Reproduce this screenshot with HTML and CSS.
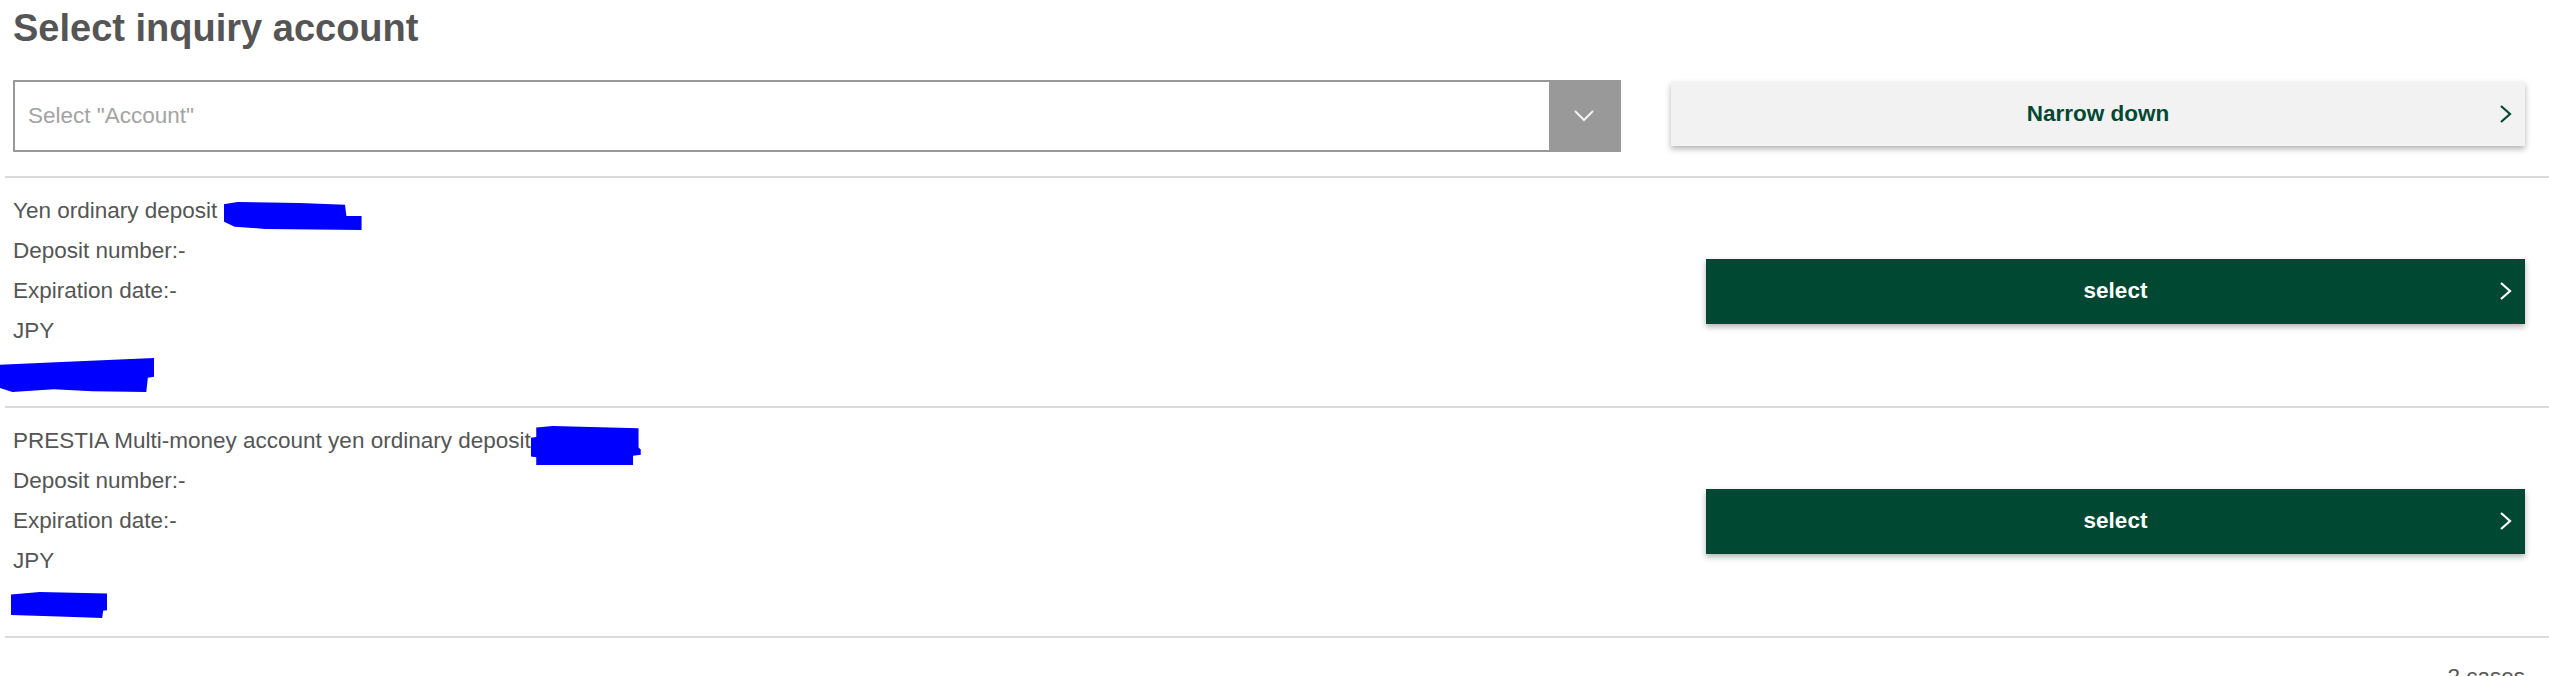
FILE: index.html
```html
<!DOCTYPE html>
<html lang="en">
<head>
    <meta charset="utf-8">
    <title>Select inquiry account</title>
    <link rel="stylesheet" href="styles.css">
</head>
<body>
<div class="page">
    <h1 class="title">Select inquiry account</h1>

    <div class="filter">
        <div class="dropdown">
            <span class="dropdown-text">Select "Account"</span>
            <span class="dropdown-arrow">
                <svg width="22" height="14" viewBox="0 0 22 14"><polyline points="2,2 11,11 20,2" fill="none" stroke="#f4f4f4" stroke-width="2"/></svg>
            </span>
        </div>
        <button class="btn btn-narrow">
            <span class="btn-label">Narrow down</span>
            <svg class="btn-icon" width="13" height="20" viewBox="0 0 13 20"><polyline points="2,2 11,10 2,18" fill="none" stroke="#004832" stroke-width="2.2"/></svg>
        </button>
    </div>

    <ul class="accounts">
        <li class="account">
            <div class="account-info">
                <p>Yen ordinary deposit <span class="mask mask-1"></span></p>
                <p>Deposit number:-</p>
                <p>Expiration date:-</p>
                <p>JPY</p>
                <p><span class="mask mask-2"></span></p>
            </div>
            <button class="btn btn-select">
                <span class="btn-label">select</span>
                <svg class="btn-icon" width="13" height="20" viewBox="0 0 13 20"><polyline points="2,2 11,10 2,18" fill="none" stroke="#ffffff" stroke-width="2.2"/></svg>
            </button>
        </li>
        <li class="account">
            <div class="account-info">
                <p>PRESTIA Multi-money account yen ordinary deposit<span class="mask mask-3"></span></p>
                <p>Deposit number:-</p>
                <p>Expiration date:-</p>
                <p>JPY</p>
                <p><span class="mask mask-4"></span></p>
            </div>
            <button class="btn btn-select">
                <span class="btn-label">select</span>
                <svg class="btn-icon" width="13" height="20" viewBox="0 0 13 20"><polyline points="2,2 11,10 2,18" fill="none" stroke="#ffffff" stroke-width="2.2"/></svg>
            </button>
        </li>
    </ul>

    <p class="count">2 cases</p>
</div>
</body>
</html>
```

FILE: styles.css
```css
body {
    margin: 0;
    font-family: "Liberation Sans", Arial, sans-serif;
    color: #555555;
    background-color: #ffffff;
}
.page {
    padding-left: 5px;
}
.title {
    margin: 0;
    padding: 6px 0 0 8px;
    font-size: 38px;
    line-height: 44px;
    font-weight: 700;
    color: #555555;
}

/* account filter */
.filter {
    display: flex;
    align-items: flex-start;
    gap: 50px;
    margin-top: 30px;
    padding: 0 24px 0 8px;
}
.dropdown {
    flex: 1;
    display: flex;
    align-items: stretch;
    height: 72px;
    box-sizing: border-box;
    border: 2px solid #999999;
}
.dropdown-text {
    flex: 1;
    display: flex;
    align-items: center;
    padding-left: 13px;
    font-size: 22.5px;
    color: #a3a3a3;
}
.dropdown-arrow {
    width: 70px;
    display: flex;
    align-items: center;
    justify-content: center;
    background-color: #999999;
}

/* buttons */
.btn {
    display: grid;
    grid-template-columns: 1fr auto 1fr;
    align-items: center;
    border: 0;
    padding: 0;
    font-family: inherit;
    font-size: 22.5px;
    font-weight: 700;
    box-shadow: 0 3px 6px rgba(0, 0, 0, 0.3);
    cursor: pointer;
}
.btn-label {
    grid-column: 2;
}
.btn-icon {
    grid-column: 3;
    justify-self: end;
    margin-right: 13px;
}
.btn-narrow {
    width: 854px;
    height: 64px;
    margin-top: 2px;
    background-color: #f2f2f2;
    color: #004832;
}
.btn-select {
    width: 819px;
    height: 65px;
    margin-left: auto;
    background-color: #004832;
    color: #ffffff;
}

/* account list */
.accounts {
    list-style: none;
    margin: 24px 0 0;
    padding: 0;
}
.account {
    display: flex;
    align-items: center;
    border-top: 2px solid #dadada;
    padding: 13px 24px 15px 8px;
}
.account:last-child {
    border-bottom: 2px solid #dadada;
}
.account-info p {
    margin: 0;
    height: 40px;
    font-size: 22.5px;
    line-height: 40px;
    white-space: nowrap;
}

/* redaction marks */
.mask {
    display: inline-block;
    background-color: #0000ff;
}
.mask-1 {
    width: 138px;
    height: 28px;
    vertical-align: -12px;
    clip-path: polygon(0 8%, 10% 0, 55% 4%, 88% 10%, 89% 50%, 100% 50%, 100% 100%, 30% 96%, 8% 88%, 0 70%);
}
.mask-2 {
    width: 154px;
    height: 34px;
    margin-left: -13px;
    margin-bottom: -4px;
    vertical-align: -10px;
    clip-path: polygon(0 20%, 40% 12%, 100% 0, 100% 55%, 96% 58%, 95% 100%, 60% 98%, 35% 92%, 8% 100%, 0 88%);
}
.mask-3 {
    width: 110px;
    height: 39px;
    margin-bottom: -6px;
    vertical-align: -11px;
    clip-path: polygon(5% 4%, 20% 0, 98% 6%, 98% 55%, 100% 60%, 100% 74%, 93% 76%, 93% 100%, 5% 100%, 5% 80%, 0 78%, 0 30%, 5% 28%);
}
.mask-4 {
    width: 96px;
    height: 26px;
    margin-left: -2px;
    vertical-align: -10px;
    clip-path: polygon(0 10%, 30% 0, 100% 6%, 100% 70%, 96% 72%, 95% 100%, 50% 94%, 0 88%);
}

.count {
    margin: 19px 0 0;
    padding-right: 24px;
    text-align: right;
    font-size: 22.5px;
    line-height: 40px;
}
```
